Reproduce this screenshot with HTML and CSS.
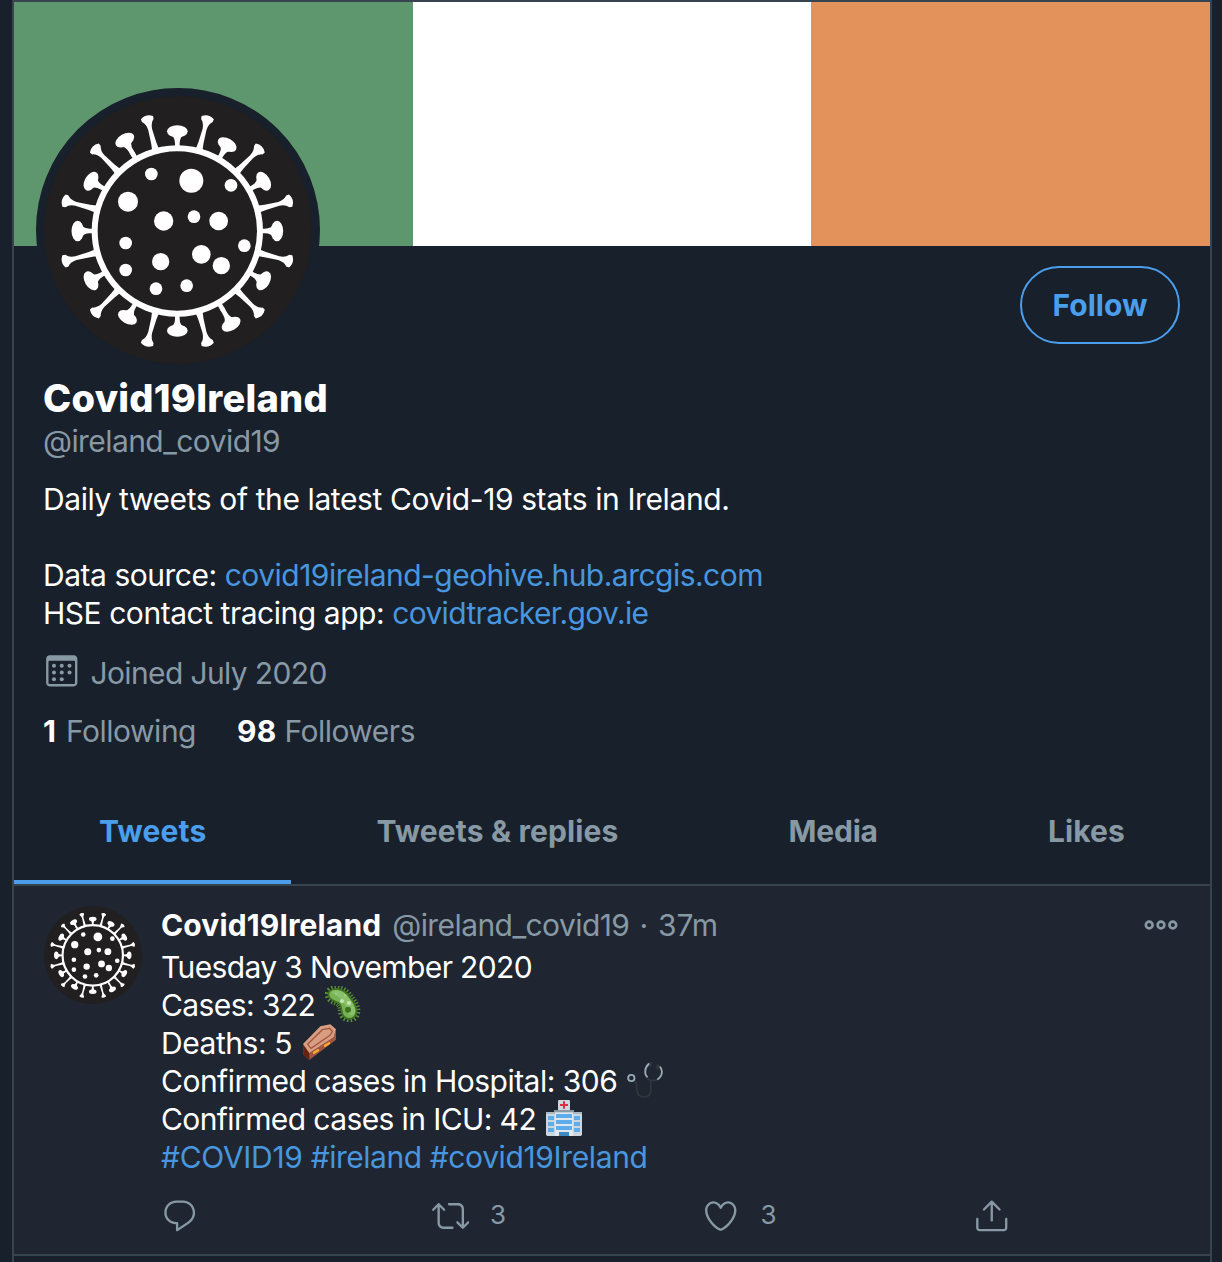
FILE: index.html
```html
<!DOCTYPE html>
<html lang="en">
<head>
<meta charset="utf-8">
<title>Covid19Ireland (@ireland_covid19)</title>
<link rel="stylesheet" href="styles.css">
</head>
<body>
<svg class="defs" width="0" height="0" aria-hidden="true">
  <defs>
    <g id="spike"><path d="M423 101Q442 88 461 101L460 110Q449 119 448 138L450 180Q451 195 455 208H429Q433 195 434 180L436 138Q435 119 424 110Z"/></g>
    <g id="knob"><ellipse cx="442" cy="154" rx="31" ry="18.5"/><path d="M421 162Q435 172 435 190V208H449V190Q449 172 463 162Z"/></g>
    <symbol id="virus" viewBox="42 48 804 804">
      <circle cx="444" cy="450" r="402" fill="#221f20"/>
      <g fill="#fff">
        <use href="#spike" transform="rotate(15 442 453)"/>
        <use href="#spike" transform="rotate(45 442 453)"/>
        <use href="#spike" transform="rotate(75 442 453)"/>
        <use href="#spike" transform="rotate(105 442 453)"/>
        <use href="#spike" transform="rotate(135 442 453)"/>
        <use href="#spike" transform="rotate(165 442 453)"/>
        <use href="#spike" transform="rotate(195 442 453)"/>
        <use href="#spike" transform="rotate(225 442 453)"/>
        <use href="#spike" transform="rotate(255 442 453)"/>
        <use href="#spike" transform="rotate(285 442 453)"/>
        <use href="#spike" transform="rotate(315 442 453)"/>
        <use href="#spike" transform="rotate(345 442 453)"/>
        <use href="#knob"/>
        <use href="#knob" transform="rotate(30 442 453)"/>
        <use href="#knob" transform="rotate(60 442 453)"/>
        <use href="#knob" transform="rotate(90 442 453)"/>
        <use href="#knob" transform="rotate(120 442 453)"/>
        <use href="#knob" transform="rotate(150 442 453) translate(0 -24)"/>
        <path d="M435 178H449V206H435Z" transform="rotate(150 442 453)"/>
        <use href="#knob" transform="rotate(180 442 453)"/>
        <use href="#knob" transform="rotate(210 442 453)"/>
        <use href="#knob" transform="rotate(240 442 453)"/>
        <use href="#knob" transform="rotate(270 442 453)"/>
        <use href="#knob" transform="rotate(300 442 453)"/>
        <use href="#knob" transform="rotate(330 442 453) translate(0 -16)"/>
        <path d="M435 178H449V206H435Z" transform="rotate(330 442 453)"/>
        <circle cx="364" cy="282" r="19"/><circle cx="484" cy="302" r="36"/><circle cx="603" cy="316" r="19"/>
        <circle cx="294" cy="365" r="30"/><circle cx="401" cy="423" r="29"/><circle cx="492" cy="410" r="19"/>
        <circle cx="566" cy="423" r="28"/><circle cx="287" cy="489" r="19"/><circle cx="643" cy="497" r="19"/>
        <circle cx="514" cy="523" r="28"/><circle cx="392" cy="545" r="26"/><circle cx="574" cy="557" r="26"/>
        <circle cx="287" cy="570" r="19"/><circle cx="378" cy="626" r="19"/><circle cx="470" cy="617" r="19"/>
      </g>
      <circle cx="442" cy="453" r="248" fill="none" stroke="#fff" stroke-width="18"/>
    </symbol>
  </defs>
</svg>

<main class="column">
  <div class="banner"><div class="green"></div><div class="white"></div><div class="orange"></div></div>

  <section class="profile">
    <div class="profile-top">
      <svg class="avatar-large" role="img" aria-label="Covid19Ireland"><use href="#virus"/></svg>
      <button class="follow">Follow</button>
    </div>
    <h1 class="name">Covid19Ireland</h1>
    <div class="handle">@ireland_covid19</div>
    <div class="bio">
      <p class="bio-intro">Daily tweets of the latest Covid-19 stats in Ireland.</p>
      <p class="source">Data source: <a class="link">covid19ireland-geohive.hub.arcgis.com</a></p>
      <p class="tracing">HSE contact tracing app: <a class="link">covidtracker.gov.ie</a></p>
    </div>
    <div class="joined">
      <svg class="icon" viewBox="0 0 24 24"><path d="M19.708 2H4.292C3.028 2 2 3.028 2 4.292v15.416C2 20.972 3.028 22 4.292 22h15.416C20.972 22 22 20.972 22 19.708V4.292C22 3.028 20.972 2 19.708 2zm.792 17.708c0 .437-.355.792-.792.792H4.292c-.437 0-.792-.355-.792-.792V6.418c0-.437.354-.79.79-.792h15.42c.436 0 .79.355.79.79z"/><circle cx="7.032" cy="8.75" r="1.285"/><circle cx="12" cy="8.75" r="1.285"/><circle cx="16.968" cy="8.75" r="1.285"/><circle cx="7.032" cy="13.156" r="1.285"/><circle cx="12" cy="13.156" r="1.285"/><circle cx="16.968" cy="13.156" r="1.285"/><circle cx="7.032" cy="17.486" r="1.285"/><circle cx="12" cy="17.486" r="1.285"/></svg>
      <span>Joined July 2020</span>
    </div>
    <div class="stats">
      <span class="following"><b>1</b> Following</span>
      <span class="followers"><b>98</b> Followers</span>
    </div>
  </section>

  <nav class="tabs">
    <a class="tab active">Tweets</a>
    <a class="tab">Tweets &amp; replies</a>
    <a class="tab media">Media</a>
    <a class="tab">Likes</a>
  </nav>

  <article class="tweet">
    <svg class="avatar-small" role="img" aria-label="Covid19Ireland"><use href="#virus"/></svg>
    <div class="content">
      <header class="tweet-head">
        <strong>Covid19Ireland</strong>
        <span class="tweet-meta"><span class="tweet-handle">@ireland_covid19</span> · 37m</span>
        <svg class="more" viewBox="0 0 34 10"><g fill="none" stroke="#8899a6" stroke-width="2.6"><circle cx="5.2" cy="5" r="3.4"/><circle cx="17" cy="5" r="3.4"/><circle cx="28.8" cy="5" r="3.4"/></g></svg>
      </header>
      <div class="text">
        <p class="date">Tuesday 3 November 2020</p>
        <p class="cases">Cases: 322 <svg class="emoji" viewBox="0 0 108 108"><path d="M14 16C26 4 54 6 70 28C88 48 100 68 92 86C86 102 64 102 54 88C48 78 52 64 44 54C36 46 20 46 13 34C9 27 10 20 14 16Z" fill="none" stroke="#5c913b" stroke-width="23" stroke-dasharray="3.6 5"/><path d="M14 16C26 4 54 6 70 28C88 48 100 68 92 86C86 102 64 102 54 88C48 78 52 64 44 54C36 46 20 46 13 34C9 27 10 20 14 16Z" fill="#77b255" stroke="#3e721d" stroke-width="5"/><path d="M17 18C30 9 52 12 67 31C82 50 96 70 88 84C84 91 72 88 68 78C65 58 50 35 17 18Z" fill="#8bc16d"/><circle cx="69" cy="71" r="9" fill="#3e721d"/><circle cx="51" cy="45" r="6" fill="#c6e5b3"/><circle cx="72" cy="51" r="6" fill="#c6e5b3"/><circle cx="33" cy="24" r="3" fill="#a6d388"/><circle cx="60" cy="28" r="3" fill="#a6d388"/></svg></p>
        <p class="deaths">Deaths: 5 <svg class="emoji" viewBox="0 0 108 108"><path d="M3 62L22 86L95 40L102 17V47L22 108L4 92Z" fill="#a0563f"/><path d="M3 62L22 86V108L4 92Z" fill="#662113"/><path d="M3 60L55 7L85 1L102 16L95 40L22 87Z" fill="#d99e82"/><path d="M17 61L61 17L83 13L91 23L84 34L27 73Z" fill="none" stroke="#a0563f" stroke-width="4"/><path d="M36 86l12-7M69 65l12-7" stroke="#ffac33" stroke-width="7" stroke-linecap="round"/></svg></p>
        <p class="hospital">Confirmed cases in Hospital: 306 <svg class="emoji" viewBox="0 0 108 108" fill="none" stroke-linecap="round"><path d="M22 56Q29 61 29 75Q29 105 50 105Q71 105 71 86V56Q92 55 98 49M71 56Q65 54 59 45M65 7Q70 4 73 3M92 15Q97 8 100 14" stroke="#31373d" stroke-width="5"/><path d="M70 3v8M92 10v9" stroke="#31373d" stroke-width="7"/><path d="M65 6Q51 19 56 38Q58 42 60 44M100 16Q109 29 101 43Q97 49 93 51" stroke="#99aab5" stroke-width="5.5"/><circle cx="13" cy="48" r="9.5" stroke="#99aab5" stroke-width="5.5"/></svg></p>
        <p class="icu">Confirmed cases in ICU: 42 <svg class="emoji" viewBox="0 0 108 108"><rect x="36" width="36" height="35" rx="3" fill="#ccd6dd"/><path d="M0 38h108v65q0 5-5 5H5q-5 0-5-5z" fill="#ccd6dd"/><path d="M0 36h108v6H0z" fill="#aab8c2"/><path d="M27 34h54v74H27z" fill="#e1e8ed"/><path d="M24 30h60v7H24z" fill="#8899a6"/><path d="M54 4v22M42 15h24" stroke="#dd2e44" stroke-width="6"/><path d="M30 42h48v12H30zM30 60h48v12H30zM30 78h48v12H30zM6 48h18v12H6zM6 66h18v12H6zM6 84h18v12H6zM84 48h18v12H84zM84 66h18v12H84zM84 84h18v12H84z" fill="#5dadec"/><path d="M39 96h30v12H39z" fill="#4289c1"/></svg></p>
        <p class="tags"><a class="link">#COVID19</a> <a class="link tag-ireland">#ireland</a> <a class="link">#covid19Ireland</a></p>
      </div>
      <footer class="actions">
        <div class="action"><svg class="icon" viewBox="0 0 24 24"><path d="M14.046 2.242l-4.148-.01h-.002c-4.374 0-7.8 3.427-7.8 7.802 0 4.098 3.186 7.206 7.465 7.37v3.828c0 .108.044.286.12.403.142.225.384.347.632.347.138 0 .277-.038.402-.118.264-.168 6.473-4.14 8.088-5.506 1.902-1.61 3.04-3.97 3.043-6.312v-.017c-.006-4.367-3.43-7.787-7.8-7.788zm3.787 12.972c-1.134.96-4.862 3.405-6.772 4.643V16.67c0-.414-.335-.75-.75-.75h-.396c-3.66 0-6.318-2.476-6.318-5.886 0-3.534 2.768-6.302 6.3-6.302l4.147.01h.002c3.532 0 6.3 2.766 6.302 6.296-.003 1.91-.942 3.844-2.514 5.176z"/></svg></div>
        <div class="action"><svg class="icon" viewBox="0 0 24 24"><path d="M23.77 15.67c-.292-.293-.767-.293-1.06 0l-2.22 2.22V7.65c0-2.068-1.683-3.75-3.75-3.75h-5.85c-.414 0-.75.336-.75.75s.336.75.75.75h5.85c1.24 0 2.25 1.01 2.25 2.25v10.24l-2.22-2.22c-.293-.293-.768-.293-1.06 0s-.294.768 0 1.06l3.5 3.5c.145.147.337.22.53.22s.383-.072.53-.22l3.5-3.5c.294-.292.294-.767 0-1.06zm-10.66 3.28H7.26c-1.24 0-2.25-1.01-2.25-2.25V6.46l2.22 2.22c.148.147.34.22.532.22s.384-.073.53-.22c.293-.293.293-.768 0-1.06l-3.5-3.5c-.293-.294-.768-.294-1.06 0l-3.5 3.5c-.294.292-.294.767 0 1.06s.767.293 1.06 0l2.22-2.22V16.7c0 2.068 1.683 3.75 3.75 3.75h5.85c.414 0 .75-.336.75-.75s-.337-.75-.75-.75z"/></svg><span>3</span></div>
        <div class="action"><svg class="icon" viewBox="0 0 24 24"><path d="M12 21.638h-.014C9.403 21.59 1.95 14.856 1.95 8.478c0-3.064 2.525-5.754 5.403-5.754 2.29 0 3.83 1.58 4.646 2.73.814-1.148 2.354-2.73 4.645-2.73 2.88 0 5.404 2.69 5.404 5.755 0 6.376-7.454 13.11-10.037 13.157H12zM7.354 4.225c-2.08 0-3.903 1.988-3.903 4.255 0 5.74 7.034 11.596 8.55 11.658 1.518-.062 8.55-5.917 8.55-11.658 0-2.267-1.823-4.255-3.903-4.255-2.528 0-3.94 2.936-3.952 2.965-.23.562-1.156.562-1.387 0-.014-.03-1.425-2.965-3.954-2.965z"/></svg><span>3</span></div>
        <div class="action"><svg class="icon" viewBox="0 0 24 24"><path d="M17.53 7.47l-5-5c-.293-.293-.768-.293-1.06 0l-5 5c-.294.293-.294.768 0 1.06s.767.294 1.06 0l3.72-3.72V15c0 .414.336.75.75.75s.75-.336.75-.75V4.81l3.72 3.72c.146.147.338.22.53.22s.384-.072.53-.22c.293-.293.293-.767 0-1.06z"/><path d="M19.708 21.944H4.292C3.028 21.944 2 20.916 2 19.652V14c0-.414.336-.75.75-.75s.75.336.75.75v5.652c0 .437.355.792.792.792h15.416c.437 0 .792-.355.792-.792V14c0-.414.336-.75.75-.75s.75.336.75.75v5.652c0 1.264-1.028 2.292-2.292 2.292z"/></svg></div>
      </footer>
    </div>
  </article>
</main>
</body>
</html>
```
FILE: styles.css
```css
* { box-sizing: border-box; }
body {
  margin: 0;
  height: 1262px;
  overflow: hidden;
  background: #18202b;
  color: #fff;
  font: 30px/38px Inter, "Liberation Sans", sans-serif;
  letter-spacing: -0.3px;
  white-space: nowrap;
}
p, h1 { margin: 0; }
.defs { display: block; }
.column {
  width: 1200px;
  height: 1262px;
  margin-left: 12px;
  border: 2px solid #38444d;
  border-bottom: 0;
}
.banner { display: grid; grid-template-columns: repeat(3, 1fr); height: 244px; }
.green { background: #5e976e; }
.white { background: #fff; }
.orange { background: #e3925b; }

.profile { height: 548px; padding: 0 30px 0 29px; }
.profile-top { display: flex; justify-content: space-between; height: 132px; }
.avatar-large {
  box-sizing: content-box;
  width: 268px;
  height: 268px;
  margin: -158px 0 0 -7px;
  border: 8px solid #18202b;
  border-radius: 50%;
  background: #18202b;
}
.follow {
  width: 160px;
  height: 78px;
  margin-top: 20px;
  padding: 0;
  border: 2px solid #4a9eeb;
  border-radius: 39px;
  background: transparent;
  color: #4a9eeb;
  font: 700 30px/38px Inter, sans-serif;
  letter-spacing: 0;
}
.name { font-size: 38px; line-height: 46px; font-weight: 800; letter-spacing: 0.25px; margin-top: -3px; }
.handle { color: #8899a6; margin-top: 1px; letter-spacing: -0.57px; }
.bio { margin-top: 20px; }
.bio-intro { margin-bottom: 38px; letter-spacing: -0.4px; }
.source { letter-spacing: -0.47px; }
.source .link { letter-spacing: -0.52px; }
.tracing { letter-spacing: -0.46px; }
.tracing .link { letter-spacing: -0.65px; }
.link { color: #4896df; }
.icon { width: 37.5px; height: 37.5px; fill: #8899a6; flex: none; }
.joined { display: flex; gap: 10px; margin-top: 22px; color: #8899a6; letter-spacing: -0.64px; }
.joined .icon { margin: -2px 0 0 0; }
.stats { display: flex; gap: 41px; margin-top: 20px; color: #8899a6; letter-spacing: -0.5px; }
.stats b { color: #fff; letter-spacing: 0.2px; }
.following b { margin-right: 2px; }

.tabs { display: flex; height: 92px; border-bottom: 2px solid #38444d; }
.tab {
  flex: 1 1 auto;
  padding-top: 18px;
  height: 90px;
  border-bottom: 4px solid transparent;
  text-align: center;
  font-weight: 700;
  letter-spacing: 0.12px;
  color: #8899a6;
}
.tab.active { color: #4a9eeb; border-color: #4a9eeb; }
.tab.media { letter-spacing: -0.2px; }

.tweet {
  display: flex;
  gap: 20px;
  height: 370px;
  padding: 20px 32px 0 30px;
  border-bottom: 2px solid #38444d;
  background: #1f2631;
}
.avatar-small { width: 98px; height: 98px; flex: none; }
.content { flex: 1; min-width: 0; margin-left: -1px; }
.tweet-head { display: flex; gap: 11px; height: 42px; }
.tweet-head strong { letter-spacing: 0.13px; }
.tweet-meta { color: #8899a6; letter-spacing: -0.1px; word-spacing: 1.7px; }
.tweet-handle { letter-spacing: -0.57px; }
.more { width: 34px; height: 10px; margin: 14px 0 0 auto; }
.text p { height: 38px; }
.date { letter-spacing: -0.62px; }
.cases { letter-spacing: -0.58px; }
.deaths { letter-spacing: -0.45px; }
.hospital { letter-spacing: -0.51px; }
.icu { letter-spacing: -0.6px; }
.tag-ireland { letter-spacing: -0.5px; }
.tags .link:last-child { letter-spacing: -0.37px; }
.emoji { width: 36px; height: 36px; vertical-align: -6px; margin-left: 2px; }
.actions { display: flex; margin-top: 21px; color: #8899a6; font-size: 26px; }
.action { display: flex; flex: none; gap: 21px; width: 270.5px; }
.action span { margin-top: -1px; }
.action:last-child { width: auto; }
```
